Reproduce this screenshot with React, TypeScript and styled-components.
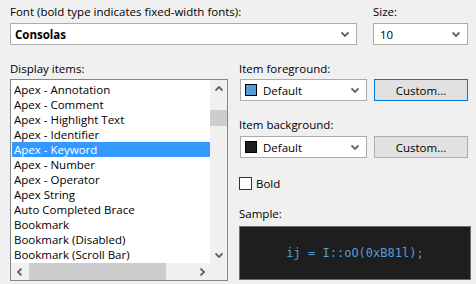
import React, { FC } from 'react';
import styled, { createGlobalStyle } from 'styled-components';

const GlobalStyle = createGlobalStyle`
  html, body {
    margin: 0;
    background: #f0f0f0;
  }
  body {
    font-family: 'Open Sans', 'Noto Sans', sans-serif;
    font-size: 11.5px;
    color: #000;
  }
`;

const Dialog = styled.div`
  width: 476px;
  height: 284px;
  box-sizing: border-box;
  padding: 4px 6px 0 10px;
  display: flex;
  flex-direction: column;
  overflow: hidden;
`;

const TopRow = styled.div`
  display: flex;
  gap: 16px;
`;

const Field = styled.div<{ $width: number }>`
  width: ${(p) => p.$width}px;
  display: flex;
  flex-direction: column;
`;

const Label = styled.div<{ $gap?: number }>`
  line-height: 16px;
  height: 16px;
  margin-bottom: ${(p) => p.$gap ?? 3}px;
  white-space: nowrap;
`;

const Combo = styled.div<{ $indent?: number }>`
  height: 22px;
  box-sizing: border-box;
  border: 1px solid #acacac;
  background: #fff;
  display: flex;
  align-items: center;
  padding-left: ${(p) => p.$indent ?? 4}px;
  padding-right: 7px;
  gap: 6px;
`;

const ComboText = styled.span<{ $bold?: boolean }>`
  flex: 1;
  font-weight: ${(p) => (p.$bold ? 700 : 400)};
  white-space: nowrap;
`;

const Swatch = styled.span<{ $color: string }>`
  width: 12px;
  height: 12px;
  box-sizing: border-box;
  border: 1px solid #000;
  background: ${(p) => p.$color};
`;

const Bottom = styled.div`
  display: flex;
  gap: 11px;
  margin-top: 16px;
`;

const ListBox = styled.div`
  width: 218px;
  height: 202px;
  box-sizing: border-box;
  border: 1px solid #828790;
  background: #fff;
  display: grid;
  grid-template-columns: 1fr 17px;
  grid-template-rows: 1fr 17px;
`;

const Items = styled.div`
  padding: 2px 0 0 1px;
  overflow: hidden;
`;

const Item = styled.div<{ $selected?: boolean }>`
  height: 15px;
  line-height: 15px;
  padding-left: 2px;
  white-space: nowrap;
  background: ${(p) => (p.$selected ? '#3399ff' : 'transparent')};
  color: ${(p) => (p.$selected ? '#fff' : '#000')};
`;

const VScroll = styled.div`
  background: #f0f0f0;
  display: grid;
  grid-template-rows: 17px 13px 16px 1fr 17px;
`;

const HScroll = styled.div`
  background: #f0f0f0;
  display: grid;
  grid-template-columns: 17px 1px 137px 1fr 17px;
`;

const Corner = styled.div`
  background: #f0f0f0;
`;

const Thumb = styled.div`
  background: #cdcdcd;
`;

const ArrowCell = styled.div`
  display: flex;
  align-items: center;
  justify-content: center;
`;

const RightCol = styled.div`
  width: 232px;
  display: flex;
  flex-direction: column;
`;

const ColorRow = styled.div`
  display: flex;
  gap: 7px;
  padding-left: 1px;
`;

const Button = styled.div<{ $focused?: boolean }>`
  width: 94px;
  height: 22px;
  box-sizing: border-box;
  border: 1px solid ${(p) => (p.$focused ? '#0078d7' : '#adadad')};
  background: #e1e1e1;
  display: flex;
  align-items: center;
  justify-content: center;
`;

const CheckRow = styled.label`
  display: flex;
  align-items: center;
  gap: 4px;
  margin-top: 19px;
  height: 13px;
`;

const CheckBox = styled.span`
  width: 13px;
  height: 13px;
  box-sizing: border-box;
  border: 1px solid #333;
  background: #fff;
`;

const Sample = styled.div`
  width: 232px;
  height: 54px;
  box-sizing: border-box;
  border: 1px solid #6d6d6d;
  background: #1e1e1e;
  color: #569cd6;
  font-family: 'DejaVu Sans Mono', 'Liberation Mono', monospace;
  font-size: 12px;
  display: flex;
  align-items: center;
  justify-content: center;
  white-space: pre;
`;

type Dir = 'up' | 'down' | 'left' | 'right';

const rot: Record<Dir, number> = { down: 0, up: 180, left: 90, right: -90 };

const Chevron: FC<{ dir?: Dir; color?: string }> = ({ dir = 'down', color = '#606060' }) => (
  <svg width="8" height="8" viewBox="0 0 8 8" style={{ transform: `rotate(${rot[dir]}deg)` }}>
    <path d="M0.5 2.5 L4 6 L7.5 2.5" fill="none" stroke={color} strokeWidth="1.8" />
  </svg>
);

const items = [
  'Apex - Annotation',
  'Apex - Comment',
  'Apex - Highlight Text',
  'Apex - Identifier',
  'Apex - Keyword',
  'Apex - Number',
  'Apex - Operator',
  'Apex String',
  'Auto Completed Brace',
  'Bookmark',
  'Bookmark (Disabled)',
  'Bookmark (Scroll Bar)',
];

const App: FC = () => {
  return (
    <Dialog>
      <GlobalStyle />
      <TopRow>
        <Field $width={347}>
          <Label>Font (bold type indicates fixed-width fonts):</Label>
          <Combo $indent={4}>
            <ComboText $bold>Consolas</ComboText>
            <Chevron />
          </Combo>
        </Field>
        <Field $width={95}>
          <Label>Size:</Label>
          <Combo $indent={6}>
            <ComboText>10</ComboText>
            <Chevron />
          </Combo>
        </Field>
      </TopRow>

      <Bottom>
        <Field $width={218}>
          <Label $gap={2}>Display items:</Label>
          <ListBox>
            <Items>
              {items.map((it) => (
                <Item key={it} $selected={it === 'Apex - Keyword'}>
                  {it}
                </Item>
              ))}
            </Items>
            <VScroll>
              <ArrowCell>
                <Chevron dir="up" />
              </ArrowCell>
              <div />
              <Thumb />
              <div />
              <ArrowCell>
                <Chevron dir="down" />
              </ArrowCell>
            </VScroll>
            <HScroll>
              <ArrowCell>
                <Chevron dir="left" />
              </ArrowCell>
              <div />
              <Thumb />
              <div />
              <ArrowCell>
                <Chevron dir="right" />
              </ArrowCell>
            </HScroll>
            <Corner />
          </ListBox>
        </Field>

        <RightCol>
          <Label $gap={2}>Item foreground:</Label>
          <ColorRow>
            <Field $width={127}>
              <Combo $indent={4}>
                <Swatch $color="#569cd6" />
                <ComboText>Default</ComboText>
                <Chevron />
              </Combo>
            </Field>
            <Button $focused>Custom...</Button>
          </ColorRow>

          <Label style={{ marginTop: 16 }}>Item background:</Label>
          <ColorRow>
            <Field $width={127}>
              <Combo $indent={4}>
                <Swatch $color="#1e1e1e" />
                <ComboText>Default</ComboText>
                <Chevron />
              </Combo>
            </Field>
            <Button>Custom...</Button>
          </ColorRow>

          <CheckRow>
            <CheckBox />
            <span>Bold</span>
          </CheckRow>

          <Label style={{ marginTop: 16 }} $gap={4}>Sample:</Label>
          <Sample>ij = I::oO(0xB81l);</Sample>
        </RightCol>
      </Bottom>
    </Dialog>
  );
};

export default App;
